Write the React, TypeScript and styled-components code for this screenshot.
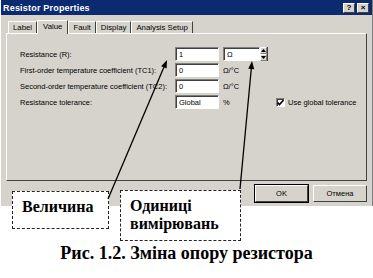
import React from 'react';
import styled, { createGlobalStyle } from 'styled-components';

const GlobalStyle = createGlobalStyle`
  * { box-sizing: border-box; }
  html, body { margin: 0; padding: 0; background: #ffffff; }
`;

const GRAY = '#d6d3cc';
const SERIF = "'Liberation Serif', 'DejaVu Serif', 'Times New Roman', serif";

const Page = styled.div`
  position: relative;
  width: 373px;
  height: 278px;
  background: #ffffff;
  overflow: hidden;
  font-family: 'Liberation Sans', Arial, sans-serif;
`;

const Window = styled.div`
  width: 373px;
  height: 206px;
  background: ${GRAY};
  border-left: 1px solid #ffffff;
  border-right: 1px solid #808080;
  display: flex;
  flex-direction: column;
`;

const TitleBar = styled.div`
  height: 15px;
  background: #0c2a70;
  display: flex;
  align-items: center;
  justify-content: space-between;
  padding: 0 3px 0 2px;
`;

const Title = styled.span`
  color: #ffffff;
  font-weight: bold;
  font-size: 9px;
  letter-spacing: 0.2px;
`;

const TitleButtons = styled.div`
  display: flex;
  gap: 2px;
`;

const TitleButton = styled.div`
  width: 12px;
  height: 10px;
  background: ${GRAY};
  border: 1px solid;
  border-color: #ffffff #404040 #404040 #ffffff;
  font-size: 8px;
  font-weight: bold;
  line-height: 8px;
  text-align: center;
  color: #000;
`;

const Body = styled.div`
  flex: 1;
  padding: 6px 5px 0 5px;
  display: flex;
  flex-direction: column;
`;

const Tabs = styled.div`
  display: flex;
  align-items: flex-end;
  height: 12px;
  padding-left: 2px;
`;

const Tab = styled.div<{ $active?: boolean }>`
  height: ${(p) => (p.$active ? '14px' : '12px')};
  margin-bottom: ${(p) => (p.$active ? '-1px' : '0')};
  padding: 0 ${(p) => (p.$active ? '5px' : '4px')};
  font-size: 7.8px;
  line-height: 11px;
  color: #000;
  border-top: 1px solid #ffffff;
  border-left: 1px solid #ffffff;
  border-right: 1px solid #404040;
  background: ${GRAY};
  position: relative;
  z-index: ${(p) => (p.$active ? 2 : 1)};
`;

const Panel = styled.div`
  height: 148px;
  border: 1px solid;
  border-color: #ffffff #404040 #404040 #ffffff;
  padding: 13px 0 0 13px;
`;

const Grid = styled.div`
  display: grid;
  grid-template-columns: 151px 44px 45px auto;
  column-gap: 4px;
  row-gap: 2px;
  grid-auto-rows: 14px;
  align-items: center;
  font-size: 7.5px;
  color: #000;
`;

const Label = styled.span`
  white-space: nowrap;
`;

const Field = styled.div<{ $width?: number }>`
  height: 14px;
  width: ${(p) => (p.$width ? `${p.$width}px` : '100%')};
  background: #ffffff;
  border: 1px solid;
  border-color: #808080 #ffffff #ffffff #808080;
  box-shadow: inset 1px 1px 0 #404040;
  padding: 0 3px;
  display: flex;
  align-items: center;
  font-size: 7.5px;
`;

const SpinWrap = styled.div`
  display: flex;
  align-items: center;
`;

const Spinner = styled.div`
  width: 8px;
  height: 14px;
  display: flex;
  flex-direction: column;
  border-right: 1px solid #404040;
`;

const SpinHalf = styled.div`
  flex: 1;
  background: ${GRAY};
  border: 1px solid;
  border-color: #ffffff #808080 #808080 #ffffff;
  display: flex;
  align-items: center;
  justify-content: center;
`;

const Unit = styled.span`
  font-size: 7.5px;
`;

const CheckRow = styled.label`
  display: flex;
  align-items: center;
  gap: 3px;
  margin-left: 4px;
  white-space: nowrap;
`;

const CheckBox = styled.div`
  width: 9px;
  height: 9px;
  background: #ffffff;
  border: 1px solid;
  border-color: #808080 #ffffff #ffffff #808080;
  box-shadow: inset 1px 1px 0 #404040;
  display: flex;
  align-items: center;
  justify-content: center;
`;

const ButtonRow = styled.div`
  display: flex;
  justify-content: flex-end;
  gap: 5px;
  margin-top: 4px;
`;

const Button = styled.div<{ $default?: boolean }>`
  width: ${(p) => (p.$default ? '53px' : '54px')};
  height: 17px;
  background: ${GRAY};
  border: 1px solid;
  border-color: #ffffff #404040 #404040 #ffffff;
  outline: ${(p) => (p.$default ? '1px solid #000' : 'none')};
  font-size: 7.5px;
  display: flex;
  align-items: center;
  justify-content: center;
  color: #000;
`;

const Caption = styled.div`
  margin-top: 37px;
  text-align: center;
  font-family: ${SERIF};
  font-weight: bold;
  font-size: 18px;
  line-height: 21px;
  color: #000;
`;

const Callout = styled.div<{ $left: number; $top: number; $w: number; $h: number }>`
  position: absolute;
  left: ${(p) => p.$left}px;
  top: ${(p) => p.$top}px;
  width: ${(p) => p.$w}px;
  height: ${(p) => p.$h}px;
  background: #ffffff;
  border: 1px dashed #222;
  overflow: hidden;
  font-family: ${SERIF};
  font-weight: bold;
  font-size: 16px;
  line-height: 18px;
  padding: 6px 0 0 9px;
  white-space: nowrap;
  color: #000;
  z-index: 3;
`;

const Overlay = styled.svg`
  position: absolute;
  left: 0;
  top: 0;
  width: 373px;
  height: 278px;
  pointer-events: none;
  z-index: 4;
`;

const Arrow: React.FC<{ x1: number; y1: number; x2: number; y2: number }> = ({ x1, y1, x2, y2 }) => {
  const a = Math.atan2(y2 - y1, x2 - x1);
  const len = 8;
  const w = 3;
  const bx = x2 - len * Math.cos(a);
  const by = y2 - len * Math.sin(a);
  const px = -Math.sin(a) * w;
  const py = Math.cos(a) * w;
  return (
    <g>
      <line x1={x1} y1={y1} x2={bx} y2={by} stroke="#000" strokeWidth={1.3} />
      <polygon points={`${x2},${y2} ${bx + px},${by + py} ${bx - px},${by - py}`} fill="#000" />
    </g>
  );
};

export default function App() {
  return (
    <Page>
      <GlobalStyle />
      <Window>
        <TitleBar>
          <Title>Resistor Properties</Title>
          <TitleButtons>
            <TitleButton>?</TitleButton>
            <TitleButton>×</TitleButton>
          </TitleButtons>
        </TitleBar>
        <Body>
          <Tabs>
            <Tab>Label</Tab>
            <Tab $active>Value</Tab>
            <Tab>Fault</Tab>
            <Tab>Display</Tab>
            <Tab>Analysis Setup</Tab>
          </Tabs>
          <Panel>
            <Grid>
              <Label>Resistance (R):</Label>
              <Field>1</Field>
              <SpinWrap>
                <Field $width={37}>Ω</Field>
                <Spinner>
                  <SpinHalf>
                    <svg width="5" height="3" viewBox="0 0 5 3"><path d="M2.5 0L5 3H0z" fill="#000" /></svg>
                  </SpinHalf>
                  <SpinHalf>
                    <svg width="5" height="3" viewBox="0 0 5 3"><path d="M0 0h5L2.5 3z" fill="#000" /></svg>
                  </SpinHalf>
                </Spinner>
              </SpinWrap>
              <span />

              <Label>First-order temperature coefficient (TC1):</Label>
              <Field>0</Field>
              <Unit>Ω/°C</Unit>
              <span />

              <Label>Second-order temperature coefficient (TC2):</Label>
              <Field>0</Field>
              <Unit>Ω/°C</Unit>
              <span />

              <Label>Resistance tolerance:</Label>
              <Field>Global</Field>
              <Unit>%</Unit>
              <CheckRow>
                <CheckBox>
                  <svg width="7" height="7" viewBox="0 0 7 7">
                    <path d="M0.5 3.5L2.5 5.5L6.5 1" stroke="#000" strokeWidth="1.6" fill="none" />
                  </svg>
                </CheckBox>
                Use global tolerance
              </CheckRow>
            </Grid>
          </Panel>
          <ButtonRow>
            <Button $default>OK</Button>
            <Button>Отмена</Button>
          </ButtonRow>
        </Body>
      </Window>
      <Caption>Рис. 1.2. Зміна опору резистора</Caption>

      <Callout $left={12} $top={191} $w={97} $h={38}>Величина</Callout>
      <Callout $left={120} $top={190} $w={121} $h={51}>
        Одиниці
        <br />
        вимірювань
      </Callout>

      <Overlay viewBox="0 0 373 278">
        <Arrow x1={108} y1={199} x2={167} y2={60} />
        <Arrow x1={240} y1={189} x2={252} y2={61} />
      </Overlay>
    </Page>
  );
}
